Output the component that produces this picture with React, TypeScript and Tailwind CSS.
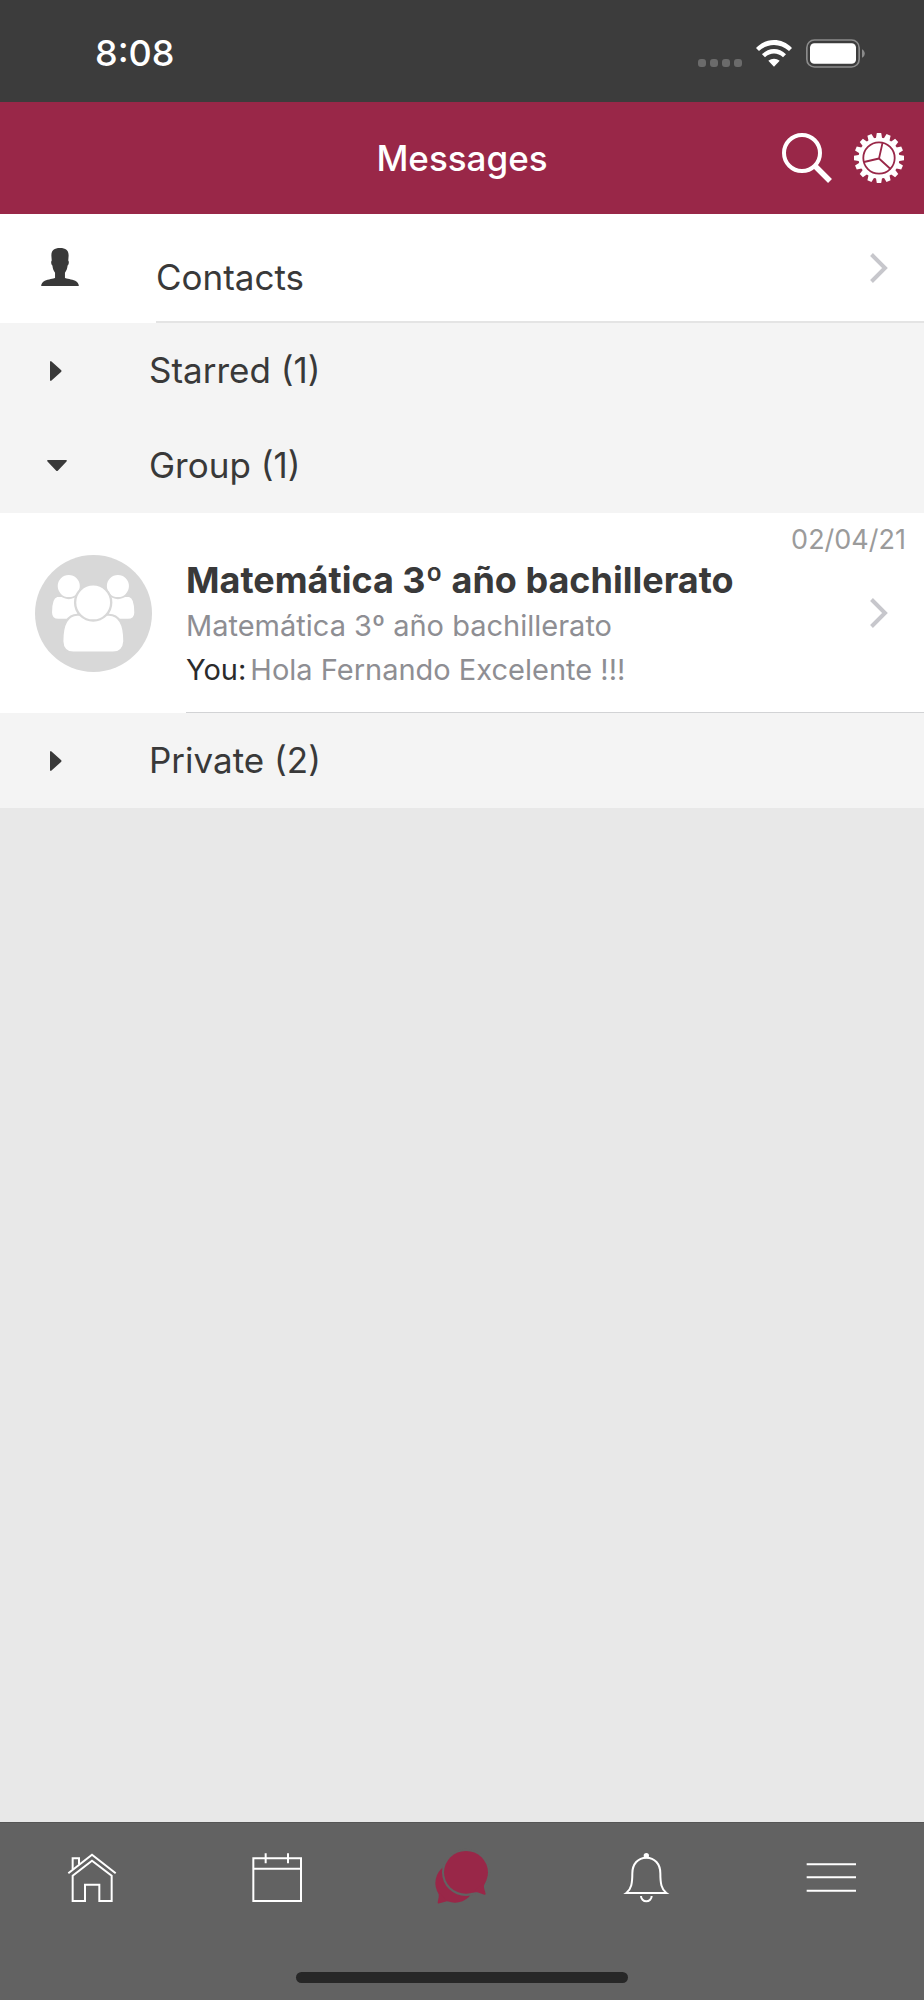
import { useState } from "react";
import type { ReactNode } from "react";

function WifiIcon() {
  return (
    <svg viewBox="0 0 108 81" className="h-[27px] w-9" aria-hidden="true">
      <path d="M0 24C31-8 77-8 108 24L99 33C73 9 35 9 9 33Z" fill="#fff" />
      <path d="M18 43C39 22 69 22 90 43L81 52C65 37 43 37 27 52Z" fill="#fff" />
      <path d="M37 62C47 54 61 54 71 62L54 80Z" fill="#fff" />
    </svg>
  );
}

function BatteryIcon() {
  return (
    <svg viewBox="0 0 177 86" className="h-[29px] w-[59px]" aria-hidden="true">
      <rect x="2.5" y="2.5" width="157" height="81" rx="23" fill="none" stroke="#8b8b8b" strokeWidth="5" />
      <rect x="12" y="12" width="138" height="62" rx="13" fill="#fff" />
      <path d="M168 30C179 36 179 50 168 56Z" fill="#8b8b8b" />
    </svg>
  );
}

function SearchIcon() {
  return (
    <svg viewBox="0 0 50 50" className="size-[50px]" aria-hidden="true">
      <circle cx="20" cy="20" r="18" fill="none" stroke="#fff" strokeWidth="4" />
      <path d="M32.5 32.5L48 48" stroke="#fff" strokeWidth="5.5" />
    </svg>
  );
}

const teeth = Array.from({ length: 16 }, (_, i) => i * 22.5);

function GearIcon() {
  return (
    <svg viewBox="0 0 50 50" className="size-[50px]" aria-hidden="true">
      {teeth.map((angle) => (
        <path key={angle} d="M21.8 6L22.8 0H27.2L28.2 6Z" fill="#fff" transform={`rotate(${angle} 25 25)`} />
      ))}
      <circle cx="25" cy="25" r="20.5" fill="#fff" />
      <g fill="none" stroke="#992748" strokeWidth="1.8">
        <circle cx="25" cy="25" r="15.7" />
        <path d="M25 25.5L28.5 10M25 25.5L10 29M25 25.5L36.5 36" />
      </g>
    </svg>
  );
}

function PersonIcon() {
  return (
    <svg viewBox="0 0 114 115" className="size-[38px]" fill="#393939" aria-hidden="true">
      <path d="M57 0C75 0 84 8 83 24L82 38C85 40 84 51 80 53C79 63 76 69 72 75V90C76 94 93 94 103 99C110 103 114 108 114 115H0C0 108 4 103 11 99C21 94 38 94 42 90V75C38 69 35 63 34 53C30 51 29 40 32 38L31 24C30 8 39 0 57 0Z" />
    </svg>
  );
}

function GroupAvatar() {
  return (
    <svg viewBox="0 0 350 350" className="size-[117px] shrink-0" aria-hidden="true">
      <circle cx="175" cy="175" r="175" fill="#d8d8d8" />
      <g fill="#fff" stroke="#d8d8d8" strokeWidth="6">
        <path d="M66 123H130V194H70Q48 194 48 172Q48 127 66 123Z" />
        <path d="M282 123H218V194H278Q300 194 300 172Q300 127 282 123Z" />
        <circle cx="101" cy="93" r="36" />
        <circle cx="248" cy="93" r="36" />
        <path d="M127 179H221Q267 180 267 258Q265 291 233 292H115Q83 291 82 258Q82 180 127 179Z" />
        <circle cx="174" cy="142" r="54" strokeWidth="7" />
      </g>
    </svg>
  );
}

function Chevron() {
  return (
    <svg viewBox="0 0 18 30" className="h-[30px] w-[18px] shrink-0" aria-hidden="true">
      <path d="M1.5 1.5L15 15L1.5 28.5" fill="none" stroke="#c7c7cc" strokeWidth="4" />
    </svg>
  );
}

function Caret({ open }: { open: boolean }) {
  return (
    <svg viewBox="0 0 20 20" className="size-5" fill="#393939" aria-hidden="true">
      {open ? (
        <path d="M1 4H19Q20.5 4.500 19.500 5.500L11 14.500Q10 15.500 9 14.500L.5 5.500Q-.5 4.500 1 4Z" />
      ) : (
        <path d="M3 1Q3.500-.5 4.500 .5L14 9Q15 10 14 11L4.500 19.500Q3.500 20.500 3 19Z" />
      )}
    </svg>
  );
}

function TabIcon({ children }: { children: ReactNode }) {
  return (
    <svg
      viewBox="0 0 156 156"
      className="size-[52px] overflow-visible"
      fill="none"
      stroke="#fff"
      strokeWidth="6"
      aria-hidden="true"
    >
      {children}
    </svg>
  );
}

const tabs = [
  {
    label: "Home",
    icon: (
      <TabIcon>
        <path d="M7 64L78 8L149 64" />
        <path d="M20 52V19H39V37" />
        <path d="M20 147V71L78 26L137 71V147H100V98H57V147Z" />
      </TabIcon>
    ),
  },
  {
    label: "Calendar",
    icon: (
      <TabIcon>
        <path d="M7 19H150V147H7ZM7 50H150M44 4V34M111 4V34" />
      </TabIcon>
    ),
  },
  {
    label: "Messages",
    icon: (
      <TabIcon>
        <g fill="#992748" stroke="none">
          <circle cx="57" cy="93" r="59" />
          <path d="M4 117Q11 126 8 136L5 151Q5 156 10 154L36 147Z" />
          <ellipse cx="90" cy="61" rx="72" ry="71" fill="#626262" />
          <ellipse cx="90" cy="61" rx="66" ry="64" />
          <path d="M150 88Q141 100 145 111L149 125Q149 129 145 128L124 121Q117 120 108 122Z" />
        </g>
      </TabIcon>
    ),
  },
  {
    label: "Notifications",
    icon: (
      <TabIcon>
        <circle cx="76" cy="11" r="8" fill="#fff" stroke="none" />
        <path d="M16 123C31 112 34 94 34 64C34 36 51 17 76 17C101 17 118 36 118 64C118 94 121 112 136 123Z" />
        <path d="M60 132A16 16 0 0 0 92 132" />
      </TabIcon>
    ),
  },
  {
    label: "Menu",
    icon: (
      <TabIcon>
        <path d="M2 37H150M2 76H150M2 116H150" />
      </TabIcon>
    ),
  },
];

type SectionProps = {
  title: string;
  count: number;
  defaultOpen?: boolean;
  children?: ReactNode;
};

function Section({ title, count, defaultOpen = false, children }: SectionProps) {
  const [open, setOpen] = useState(defaultOpen);

  return (
    <section>
      <button
        type="button"
        aria-expanded={open}
        onClick={() => setOpen(!open)}
        className="flex h-[95px] w-full items-center bg-[#f4f4f4] pl-[47px] text-left text-[35px]"
      >
        <span className="w-[102px]">
          <Caret open={open} />
        </span>
        {title} ({count})
      </button>
      {open && children}
    </section>
  );
}

function Conversation() {
  return (
    <a href="#conversation" className="flex min-h-[200px] items-center bg-white pl-[35px]">
      <GroupAvatar />
      <div className="ml-[34px] flex-1 self-stretch border-b border-[#d2d3d5] pt-[11px]">
        <time dateTime="2021-04-02" className="block pr-[18px] text-right text-[27px] leading-8 text-[#9b9b9b]">
          02/04/21
        </time>
        <div className="flex items-start justify-between pr-9">
          <div className="text-[29px] leading-[44px] text-[#8e8e93]">
            <h2 className="text-[36px] leading-[48px] font-bold text-[#393939]">Matemática 3º año bachillerato</h2>
            <p>Matemática 3º año bachillerato</p>
            <p className="flex gap-1">
              <span className="text-[#2b2b2b]">You:</span>
              <span>Hola Fernando Excelente !!!</span>
            </p>
          </div>
          <div className="pt-[42px]">
            <Chevron />
          </div>
        </div>
      </div>
    </a>
  );
}

export default function App() {
  return (
    <div className="flex min-h-screen flex-col bg-[#e8e8e8] font-['Inter',sans-serif] text-[#393939]">
      <div className="flex h-[102px] items-center justify-between bg-[#3c3c3c] pt-1 pr-[59px] pl-[95px] text-white">
        <time className="text-[36px] font-medium">8:08</time>
        <div className="flex items-center gap-3.5">
          <div className="flex gap-1 pt-5">
            <span className="size-2 rounded-[3px] bg-[#6b6b6b]" />
            <span className="size-2 rounded-[3px] bg-[#6b6b6b]" />
            <span className="size-2 rounded-[3px] bg-[#6b6b6b]" />
            <span className="size-2 rounded-[3px] bg-[#6b6b6b]" />
          </div>
          <WifiIcon />
          <BatteryIcon />
        </div>
      </div>

      <header className="grid h-28 grid-cols-[1fr_auto_1fr] items-center bg-[#992748] px-5 text-white">
        <h1 className="col-start-2 text-[35px] font-medium">Messages</h1>
        <div className="flex justify-end gap-[22px]">
          <button type="button" aria-label="Search">
            <SearchIcon />
          </button>
          <button type="button" aria-label="Settings">
            <GearIcon />
          </button>
        </div>
      </header>

      <main className="flex-1">
        <a href="#contacts" className="flex h-[109px] items-stretch bg-white pl-[41px]">
          <span className="flex w-[115px] items-center pb-1">
            <PersonIcon />
          </span>
          <span className="flex flex-1 items-center justify-between border-b-2 border-[#e4e4e4] pr-9">
            <span className="pt-5 text-[35px]">Contacts</span>
            <Chevron />
          </span>
        </a>
        <Section title="Starred" count={1} />
        <Section title="Group" count={1} defaultOpen>
          <Conversation />
        </Section>
        <Section title="Private" count={2} />
      </main>

      <footer className="border-t border-[#555555] bg-[#626262] pt-[29px] pb-[17px]">
        <nav className="flex" aria-label="Main">
          {tabs.map((tab) => (
            <a
              key={tab.label}
              href={`#${tab.label.toLowerCase()}`}
              aria-label={tab.label}
              className="flex flex-1 justify-center"
            >
              {tab.icon}
            </a>
          ))}
        </nav>
        <div className="mx-auto mt-[68px] h-[11px] w-[36%] rounded-full bg-[#272727]" />
      </footer>
    </div>
  );
}
